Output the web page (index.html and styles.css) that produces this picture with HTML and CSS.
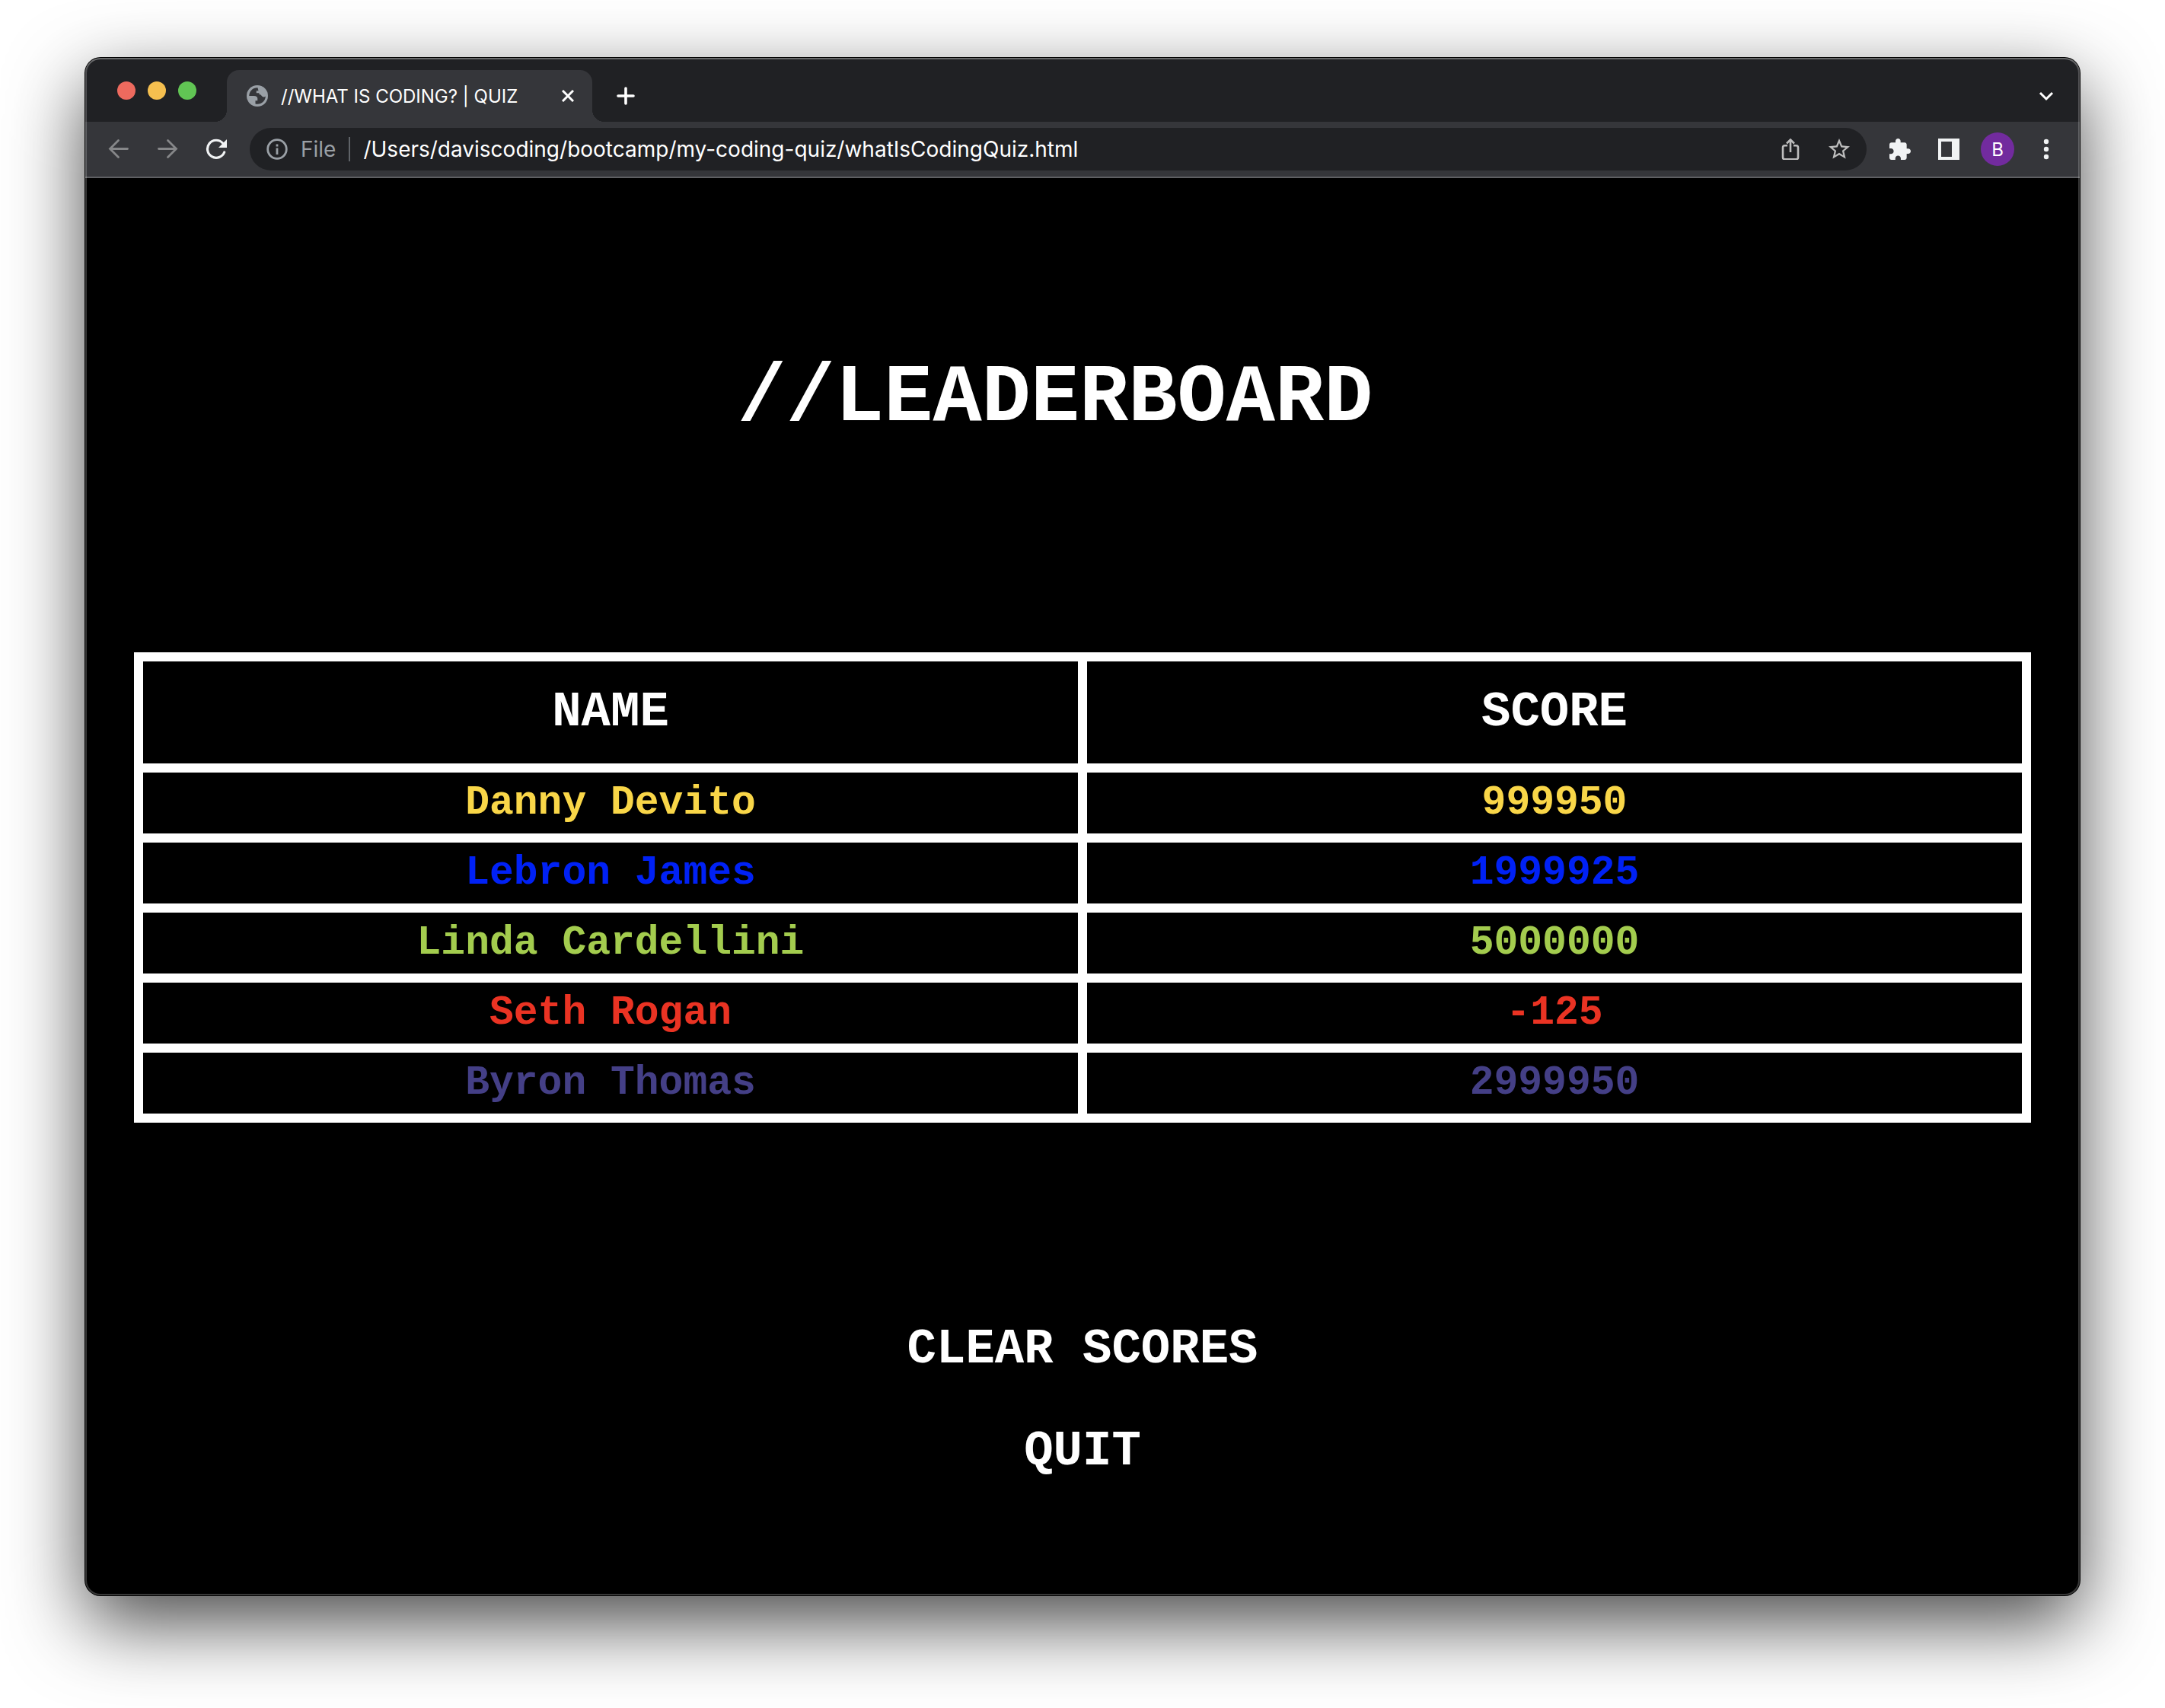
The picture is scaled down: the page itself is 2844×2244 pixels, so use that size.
FILE: index.html
```html
<!DOCTYPE html>
<html lang="en">
<head>
<meta charset="utf-8">
<title>//WHAT IS CODING? | QUIZ</title>
<link rel="stylesheet" href="styles.css">
</head>
<body>
<div class="window">
  <header class="tabstrip">
    <div class="lights">
      <button class="light light-close" aria-label="Close window"></button>
      <button class="light light-min" aria-label="Minimize window"></button>
      <button class="light light-zoom" aria-label="Zoom window"></button>
    </div>
    <div class="tab">
      <svg class="icon-28" viewBox="0 0 28 28" aria-hidden="true"><circle cx="14" cy="14" r="14" fill="#9aa0a6"/><path d="M14.500 3.200C8 3 3.300 8 3.300 14H9.500C12.800 14 14.300 15.200 14.300 17.600V20.300H11.500V24.400C18.500 26 24.800 21 24.800 14.500C23.500 15.800 21 15.700 20 14.300C19 13.200 18.800 12 16.500 12V10.200H12.800V7.200H15.500Z" fill="#35363a"/></svg>
      <span class="tab-title">//WHAT IS CODING? | QUIZ</span>
      <button class="icon-button small" aria-label="Close tab"><svg class="icon-16" viewBox="0 0 16 16" fill="none" stroke="#fff" stroke-width="3"><path d="M1 1l14 14M15 1L1 15"/></svg></button>
    </div>
    <button class="icon-button small new-tab" aria-label="New tab"><svg class="icon-24" viewBox="0 0 24 24" fill="none" stroke="#fff" stroke-width="3.600" stroke-linecap="round"><path d="M12 2v20M2 12h20"/></svg></button>
    <button class="icon-button tab-search" aria-label="Search tabs"><svg class="icon-24" viewBox="0 0 24 24" fill="none" stroke="#fff" stroke-width="3"><path d="M4 8l8 8 8-8"/></svg></button>
  </header>
  <nav class="toolbar">
    <button class="icon-button" aria-label="Back"><svg class="icon-28" viewBox="0 0 28 28" fill="none" stroke="#868789" stroke-width="2.800" stroke-linecap="round"><path d="M25.500 13.500H3M13.500 2.500L2.500 13.500l11 11"/></svg></button>
    <button class="icon-button" aria-label="Forward"><svg class="icon-28" viewBox="0 0 28 28" fill="none" stroke="#868789" stroke-width="2.800" stroke-linecap="round"><path d="M2.500 13.500H25M14.500 2.500l11 11-11 11"/></svg></button>
    <button class="icon-button" aria-label="Reload"><svg class="icon-28" viewBox="0 0 28 28"><path d="M24.700 18A11.500 11.500 0 1 1 22.500 6" fill="none" stroke="#f1f3f4" stroke-width="3.200" stroke-linecap="round"/><path d="M28 1v11H17z" fill="#f1f3f4"/></svg></button>
    <form class="address">
      <svg class="icon-28" viewBox="0 0 28 28" fill="none" stroke="#9aa0a6" stroke-width="2.800" aria-hidden="true"><circle cx="14" cy="14" r="12.300"/><path d="M14 12.500V21M14 7.500v3"/></svg>
      <label class="scheme" for="url">File</label>
      <span class="divider"></span>
      <input class="url" id="url" type="text" value="/Users/daviscoding/bootcamp/my-coding-quiz/whatIsCodingQuiz.html" spellcheck="false">
      <button class="icon-button bare" type="button" aria-label="Share"><svg class="icon-28" viewBox="0 0 28 28" fill="none" stroke="#bdbdbd" stroke-width="2.600"><path d="M10 9.200H6.500a2.500 2.500 0 0 0-2.500 2.500v13a2.500 2.500 0 0 0 2.500 2.500h15a2.500 2.500 0 0 0 2.500-2.500v-13a2.500 2.500 0 0 0-2.500-2.500H18M14 18V1.500M9 6.500l5-5 5 5"/></svg></button>
      <button class="icon-button bare" type="button" aria-label="Bookmark"><svg class="icon-28" viewBox="2 2 20 20" fill="#bdbdbd"><path d="M22 9.240l-7.190-.62L12 2 9.190 8.630 2 9.240l5.460 4.730L5.820 21 12 17.270 18.180 21l-1.630-7.030L22 9.240zM12 15.400l-3.760 2.270 1-4.280-3.320-2.880 4.380-.38L12 6.100l1.710 4.040 4.380.38-3.320 2.880 1 4.280L12 15.400z"/></svg></button>
    </form>
    <button class="icon-button" aria-label="Extensions"><svg class="icon-28" viewBox="2 1 21 21" fill="#f1f3f4"><path d="M20.500 11H19V7c0-1.100-.9-2-2-2h-4V3.500C13 2.120 11.880 1 10.500 1S8 2.120 8 3.500V5H4c-1.100 0-1.990.9-1.990 2v3.800H3.500c1.490 0 2.700 1.210 2.700 2.700s-1.210 2.700-2.700 2.700H2V20c0 1.100.9 2 2 2h3.800v-1.500c0-1.490 1.210-2.700 2.700-2.700 1.490 0 2.700 1.210 2.700 2.700V22H17c1.100 0 2-.9 2-2v-4h1.500c1.380 0 2.500-1.120 2.500-2.500S21.880 11 20.500 11z"/></svg></button>
    <button class="icon-button" aria-label="Side panel"><svg class="icon-28" viewBox="0 0 28 28" fill="#f1f3f4"><path fill-rule="evenodd" d="M0 0h28v28H0zM4 4v20h14V4z"/></svg></button>
    <button class="icon-button avatar" aria-label="Profile">B</button>
    <button class="icon-button" aria-label="Menu"><svg class="icon-28" viewBox="0 0 28 28" fill="#f1f3f4"><circle cx="14" cy="4" r="3.200"/><circle cx="14" cy="14" r="3.200"/><circle cx="14" cy="24" r="3.200"/></svg></button>
  </nav>
  <main class="page">
    <h1 class="title">//LEADERBOARD</h1>
    <table class="scores">
      <thead>
        <tr><th scope="col">NAME</th><th scope="col">SCORE</th></tr>
      </thead>
      <tbody>
        <tr class="yellow"><td>Danny Devito</td><td>999950</td></tr>
        <tr class="blue"><td>Lebron James</td><td>1999925</td></tr>
        <tr class="green"><td>Linda Cardellini</td><td>5000000</td></tr>
        <tr class="red"><td>Seth Rogan</td><td>-125</td></tr>
        <tr class="purple"><td>Byron Thomas</td><td>2999950</td></tr>
      </tbody>
    </table>
    <div class="actions">
      <button class="action">CLEAR SCORES</button>
      <button class="action">QUIT</button>
    </div>
  </main>
</div>
</body>
</html>
```
FILE: styles.css
```css
* { box-sizing: border-box; }

body {
  margin: 0;
  min-height: 100vh;
  padding: 76px 112px 148px;
  display: flex;
  background: #fff;
  font-family: Inter, "Liberation Sans", sans-serif;
}

button {
  margin: 0;
  padding: 0;
  border: 0;
  background: none;
  color: inherit;
  font: inherit;
}

svg { display: block; flex: none; }

.window {
  position: relative;
  flex: 1;
  min-width: 0;
  display: flex;
  flex-direction: column;
  border-radius: 20px;
  background: #000;
  color: #fff;
  box-shadow: 0 0 0 1px #000, 0 36px 100px rgba(0, 0, 0, .72);
}

/* light rim along the inside edge of the window */
.window::after {
  content: "";
  position: absolute;
  inset: 0;
  border-radius: 20px;
  pointer-events: none;
  box-shadow: inset 0 0 0 2px rgba(255, 255, 255, .22), inset 0 2px 0 rgba(255, 255, 255, .14);
}

.icon-16 { width: 16px; height: 16px; }
.icon-24 { width: 24px; height: 24px; }
.icon-28 { width: 28px; height: 28px; }

.icon-button {
  flex: none;
  width: 40px;
  height: 44px;
  display: flex;
  align-items: center;
  justify-content: center;
}
.icon-button.small { width: 32px; }
.icon-button.bare { width: 28px; }

.tabstrip {
  height: 84px;
  padding: 0 24px 0 42px;
  display: flex;
  align-items: flex-end;
  border-radius: 20px 20px 0 0;
  background: #202124;
}

.lights { display: flex; gap: 16px; padding-bottom: 29px; }
.light { width: 24px; height: 24px; border-radius: 50%; }
.light-close { background: #ed6a5e; }
.light-min { background: #f5bf4f; }
.light-zoom { background: #61c554; }

.tab {
  position: relative;
  width: 480px;
  height: 68px;
  margin-left: 40px;
  padding: 0 16px 0 26px;
  display: flex;
  align-items: center;
  gap: 17px;
  border-radius: 16px 16px 0 0;
  background: #35363a;
}
.tab::before,
.tab::after {
  content: "";
  position: absolute;
  bottom: 0;
  width: 16px;
  height: 16px;
}
.tab::before { right: 100%; background: radial-gradient(circle at 0 0, transparent 16px, #35363a 16px); }
.tab::after { left: 100%; background: radial-gradient(circle at 100% 0, transparent 16px, #35363a 16px); }
.tab-title { flex: 1; font-size: 24px; white-space: nowrap; }

.new-tab { margin: 0 0 12px 28px; }
.tab-search { margin: 0 0 12px auto; }

.toolbar {
  height: 74px;
  padding: 0 24px;
  display: flex;
  align-items: center;
  gap: 24px;
  background: #35363a;
  border-bottom: 2px solid #5f6063;
}

.address {
  flex: 1;
  min-width: 0;
  height: 56px;
  margin: 0;
  padding: 0 22px;
  display: flex;
  align-items: center;
  gap: 17px;
  border-radius: 28px;
  background: #202124;
  font-size: 28px;
}
.scheme { color: #9aa0a6; }
.divider { width: 2px; height: 32px; background: #5f6368; }
.url {
  flex: 1;
  min-width: 0;
  padding: 0;
  border: 0;
  outline: 0;
  background: none;
  color: #fff;
  font: inherit;
}
.bare + .bare { margin-left: 19px; }

.avatar {
  width: 44px;
  margin: 0 -2px;
  border-radius: 50%;
  background: #722b9e;
  font-size: 24px;
}

.page {
  flex: 1;
  padding: 226px 64px 96px;
  font-family: "Liberation Mono", monospace;
  font-weight: 700;
}

.title {
  margin: 0 0 269px;
  padding-right: 72px;
  font-size: 107px;
  line-height: 128px;
  text-align: center;
}

.scores {
  width: 100%;
  table-layout: fixed;
  border-collapse: collapse;
  text-align: center;
}
.scores th,
.scores td {
  padding: 0;
  border: 12px solid #fff;
}
.scores th { height: 146px; font-size: 64px; line-height: 64px; }
.scores td { height: 92px; font-size: 53px; line-height: 56px; }

.yellow { color: #f9d648; }
.blue { color: #0021f5; }
.green { color: #a3cc4e; }
.red { color: #ea3323; }
.purple { color: #443f86; }

.actions {
  margin-top: 231px;
  display: flex;
  flex-direction: column;
  align-items: center;
}
.action {
  height: 134px;
  font-size: 64px;
  line-height: 64px;
}
```
